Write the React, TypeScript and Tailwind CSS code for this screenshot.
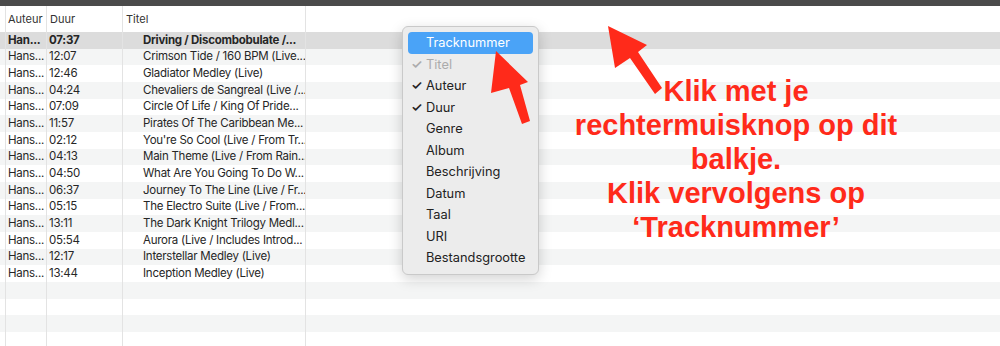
const rows = [
  ["Han...", "07:37", "Driving / Discombobulate /..."],
  ["Hans...", "12:07", "Crimson Tide / 160 BPM (Live..."],
  ["Hans...", "12:46", "Gladiator Medley (Live)"],
  ["Hans...", "04:24", "Chevaliers de Sangreal (Live /..."],
  ["Hans...", "07:09", "Circle Of Life / King Of Pride..."],
  ["Hans...", "11:57", "Pirates Of The Caribbean Me..."],
  ["Hans...", "02:12", "You're So Cool (Live / From Tr..."],
  ["Hans...", "04:13", "Main Theme (Live / From Rain..."],
  ["Hans...", "04:50", "What Are You Going To Do W..."],
  ["Hans...", "06:37", "Journey To The Line (Live / Fr..."],
  ["Hans...", "05:15", "The Electro Suite (Live / From..."],
  ["Hans...", "13:11", "The Dark Knight Trilogy Medl..."],
  ["Hans...", "05:54", "Aurora (Live / Includes Introd..."],
  ["Hans...", "12:17", "Interstellar Medley (Live)"],
  ["Hans...", "13:44", "Inception Medley (Live)"],
  ["", "", ""],
  ["", "", ""],
  ["", "", ""],
  ["", "", ""],
];

const menu = [
  { label: "Tracknummer", active: true },
  { label: "Titel", check: true, disabled: true },
  { label: "Auteur", check: true },
  { label: "Duur", check: true },
  { label: "Genre" },
  { label: "Album" },
  { label: "Beschrijving" },
  { label: "Datum" },
  { label: "Taal" },
  { label: "URI" },
  { label: "Bestandsgrootte" },
];

const App = () => {
  return (
    <div
      className="relative h-[346px] w-[1000px] overflow-hidden bg-white text-[#262626]"
      style={{ fontFamily: "Inter, 'Noto Sans', sans-serif" }}
    >
      {/* Top bar */}
      <div className="h-[6px] bg-[#4b4b4b]" />

      {/* Header */}
      <div className="flex h-[26px] items-center text-[11px] text-[#333]">
        <div className="h-full w-[6px] border-r border-[#e3e3e3]" />
        <div className="flex h-full w-[41px] items-center overflow-hidden whitespace-nowrap border-r border-[#e3e3e3] pl-[2px]">Auteur</div>
        <div className="flex h-full w-[76px] items-center border-r border-[#e3e3e3] pl-[3px]">Duur</div>
        <div className="flex h-full w-[183px] items-center border-r border-[#e3e3e3] pl-[3px]">Titel</div>
      </div>

      {/* Rows */}
      {rows.map((r, i) => (
        <div
          key={i}
          className={
            "flex h-[16.67px] items-center text-[11.5px] tracking-[-0.25px] whitespace-nowrap " +
            (i === 0 ? "bg-[#dcdcdc] font-bold" : i % 2 === 1 ? "bg-[#f4f5f5]" : "bg-white")
          }
        >
          <div className="h-full w-[6px] border-r border-[#e3e3e3]" />
          <div className="flex h-full w-[41px] items-center overflow-hidden border-r border-[#e3e3e3] pl-[2px]">{r[0]}</div>
          <div className="flex h-full w-[76px] items-center border-r border-[#e3e3e3] pl-[2px]">{r[1]}</div>
          <div className="flex h-full w-[183px] items-center overflow-hidden border-r border-[#e3e3e3] pl-[20px]">{r[2]}</div>
        </div>
      ))}

      {/* Context menu */}
      <div className="absolute left-[402px] top-[26px] w-[137px] rounded-[6px] border border-[#c9c9c9] bg-[#ececec] px-[5px] py-[5px] shadow-[0_4px_14px_rgba(0,0,0,0.18)]">
        {menu.map((m) => (
          <div
            key={m.label}
            className={
              "flex h-[21.5px] items-center rounded-[4px] text-[12.8px] " +
              (m.active ? "bg-[#4aa3f7] text-white" : m.disabled ? "text-[#ababab]" : "text-[#222]")
            }
          >
            <span className="w-[18px] pl-[3px] text-[13px] font-semibold">{m.check ? "✓" : ""}</span>
            {m.label}
          </div>
        ))}
      </div>

      {/* Arrows */}
      <svg className="absolute left-0 top-0" width="1000" height="346">
        <polygon points="496,51 528,82 520,85 530,121 522,124 509,88 491,93" fill="#ff2a1a" />
        <polygon points="608,26 647,45 638,52 662,88 655,94 630,58 615,68" fill="#ff2a1a" />
      </svg>

      {/* Annotation */}
      <div
        className="absolute left-[536px] top-[74px] w-[400px] text-center text-[29px] font-bold leading-[34px] text-[#ff2a1a]"
        style={{ fontFamily: "'Liberation Sans', Arial, sans-serif" }}
      >
        Klik met je
        <br />
        rechtermuisknop op dit
        <br />
        balkje.
        <br />
        Klik vervolgens op
        <br />
        ‘Tracknummer’
      </div>
    </div>
  );
};

export default App;
